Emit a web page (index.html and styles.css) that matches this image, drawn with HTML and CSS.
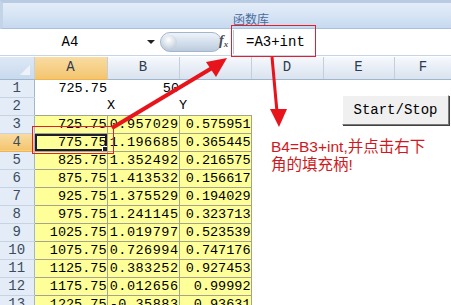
FILE: index.html
```html
<!DOCTYPE html>
<html lang="zh">
<head>
  <meta charset="UTF-8" />
  <title>函数库 - 填充柄</title>
  <link rel="stylesheet" href="styles.css">
</head>
<body>
  <div class="window">
    <!-- Ribbon group strip -->
    <div class="ribbon">
      <div class="ribbon-label">函数库</div>
    </div>

    <!-- Name box + formula bar -->
    <div class="formula-bar">
      <div class="name-box">A4</div>
      <div class="name-drop"></div>
      <div class="pill"><span class="knob"></span></div>
      <div class="fx">f<sub>x</sub></div>
      <div class="formula-input">=A3+int</div>
    </div>

    <!-- Worksheet -->
    <table class="sheet">
      <colgroup>
        <col class="c-row"><col class="c-a"><col class="c-b"><col class="c-c"><col class="c-d"><col class="c-e"><col class="c-f">
      </colgroup>
      <tr class="col-heads">
        <th class="corner"></th><th class="hot">A</th><th>B</th><th>C</th><th>D</th><th>E</th><th>F</th>
      </tr>
      <tr><th>1</th><td class="num">725.75</td><td class="num">50</td><td></td><td></td><td></td><td></td></tr>
      <tr><th>2</th><td></td><td class="txt">X</td><td class="txt">Y</td><td></td><td></td><td></td></tr>
      <tr><th>3</th><td class="num y">725.75</td><td class="num y wide">0.957029</td><td class="num y">0.575951</td><td></td><td></td><td></td></tr>
      <tr><th class="hot">4</th><td class="num y active">775.75</td><td class="num y wide">1.196685</td><td class="num y">0.365445</td><td></td><td></td><td></td></tr>
      <tr><th>5</th><td class="num y">825.75</td><td class="num y wide">1.352492</td><td class="num y">0.216575</td><td></td><td></td><td></td></tr>
      <tr><th>6</th><td class="num y">875.75</td><td class="num y wide">1.413532</td><td class="num y">0.156617</td><td></td><td></td><td></td></tr>
      <tr><th>7</th><td class="num y">925.75</td><td class="num y wide">1.375529</td><td class="num y">0.194029</td><td></td><td></td><td></td></tr>
      <tr><th>8</th><td class="num y">975.75</td><td class="num y wide">1.241145</td><td class="num y">0.323713</td><td></td><td></td><td></td></tr>
      <tr><th>9</th><td class="num y">1025.75</td><td class="num y wide">1.019797</td><td class="num y">0.523539</td><td></td><td></td><td></td></tr>
      <tr><th>10</th><td class="num y">1075.75</td><td class="num y wide">0.726994</td><td class="num y">0.747176</td><td></td><td></td><td></td></tr>
      <tr><th>11</th><td class="num y">1125.75</td><td class="num y wide">0.383252</td><td class="num y">0.927453</td><td></td><td></td><td></td></tr>
      <tr><th>12</th><td class="num y">1175.75</td><td class="num y wide">0.012656</td><td class="num y">0.99992</td><td></td><td></td><td></td></tr>
      <tr><th>13</th><td class="num y">1225.75</td><td class="num y wide">-0.35883</td><td class="num y">0.93631</td><td></td><td></td><td></td></tr>
    </table>

    <!-- Floating control and annotations -->
    <button class="start-stop">Start/Stop</button>
    <div class="note">B4=B3+int,并点击右下<br>角的填充柄!</div>
    <div class="mark mark-formula"></div>
    <div class="mark mark-cell"></div>
    <svg class="arrows" width="451" height="305" viewBox="0 0 451 305">
      <g fill="#e8141c" stroke="#e8141c">
        <line x1="112" y1="128" x2="212" y2="68" stroke-width="4" />
        <polygon points="227,58 206,62 216,77" stroke="none" />
        <line x1="272" y1="57" x2="277" y2="112" stroke-width="3" />
        <polygon points="270,109 287,109 279,127" stroke="none" />
      </g>
    </svg>
  </div>
</body>
</html>
```

FILE: styles.css
```css
html, body {
  margin: 0;
  padding: 0;
  background: #fff;
  overflow: hidden;
}
.window {
  position: relative;
  width: 451px;
  height: 305px;
  overflow: hidden;
  font-family: "Liberation Mono", "DejaVu Sans Mono", monospace;
}
/* Ribbon strip with the group label */
.ribbon {
  height: 25px;
  border-top: 3px solid #b9cbe2;
  border-left: 3px solid #c3d3e8;
  border-bottom: 1px solid #a9bfdb;
  background: linear-gradient(to bottom, #e4edf8, #d9e6f5 40%, #c7d9f0);
  position: relative;
}
.ribbon-label {
  position: absolute;
  left: 230px;
  top: 9px;
  font-family: "Noto Sans CJK SC", sans-serif;
  font-size: 12px;
  line-height: 14px;
  color: #4a6c9b;
}
/* Formula bar */
.formula-bar {
  display: flex;
  align-items: center;
  height: 26px;
  background: #fff;
  border-bottom: 1px solid #c5d4e6;
}
.name-box {
  width: 140px;
  text-align: center;
  font-size: 14px;
  color: #000;
}
.name-drop {
  width: 0;
  height: 0;
  margin-left: 7px;
  border-left: 4px solid transparent;
  border-right: 4px solid transparent;
  border-top: 4px solid #222;
}
.pill {
  width: 62px;
  height: 20px;
  margin-left: 5px;
  border-radius: 10px;
  background: linear-gradient(to bottom, #eef3f9, #d2deeb 55%, #bccbdd);
  border: 1px solid #a3b5ca;
  box-sizing: border-box;
  position: relative;
}
.knob {
  position: absolute;
  left: 2px;
  top: 2px;
  width: 14px;
  height: 14px;
  border-radius: 50%;
  background: radial-gradient(circle at 40% 35%, #ffffff, #c9d4e0 70%, #a9b6c6);
}
.fx {
  margin-left: -3px;
  width: 14px;
  position: relative;
  font-family: "Liberation Serif", serif;
  font-style: italic;
  font-weight: bold;
  font-size: 14px;
  line-height: 14px;
  color: #4a4f58;
}
.fx sub {
  font-size: 9px;
  vertical-align: -2px;
}
.formula-input {
  flex: 1;
  height: 24px;
  line-height: 24px;
  border-left: 1px solid #b8c8dc;
  padding-left: 12px;
  font-size: 14px;
  color: #000;
}
/* Worksheet grid */
.sheet {
  border-collapse: collapse;
  table-layout: fixed;
  width: 452px;
  margin-top: 1px;
  font-size: 13.5px;
}
.c-row { width: 34px; }
.c-a { width: 73px; }
.c-b { width: 72px; }
.c-c { width: 72px; }
.c-d { width: 72px; }
.c-e { width: 71px; }
.c-f { width: 58px; }
.sheet th,
.sheet td {
  height: 18px;
  padding: 0;
  box-sizing: border-box;
  white-space: nowrap;
  overflow: hidden;
  line-height: 17px;
}
.sheet th {
  font-weight: normal;
  text-align: center;
  background: #e4ecf7;
  color: #3b4c60;
  border-bottom: 1px solid #c6d3e3;
  border-right: 1px solid #9eb6ce;
  font-size: 14px;
}
.col-heads th {
  height: 22px;
  line-height: 21px;
  background: linear-gradient(to bottom, #f6f9fd, #e4ebf4 60%, #dae3ee);
  border-right: 1px solid #c3cfdd;
  border-bottom: 1px solid #9eb6ce;
  color: #2c3c4f;
}
.col-heads th.corner {
  background: linear-gradient(to bottom, #dde8f5, #c9daee);
  position: relative;
}
.corner::after {
  content: "";
  position: absolute;
  right: 4px;
  bottom: 4px;
  border-left: 10px solid transparent;
  border-bottom: 10px solid #eef3fa;
}
.sheet th.hot,
.col-heads th.hot {
  background: linear-gradient(to bottom, #f9dca2, #f3c46e);
  border-bottom-color: #f2b24c;
}
.sheet td {
  color: #000;
}
.num {
  text-align: right;
  padding-right: 3px;
}
.txt {
  text-align: left;
  padding-left: 4px;
}
.y {
  background: #ffff99;
  border: 1px solid #a4a48c;
}
.wide {
  letter-spacing: 0.5px;
  padding-right: 2px;
}
.active {
  position: relative;
  box-shadow: inset 0 0 0 2px #1d1d2b;
}
.active::after {
  content: "";
  position: absolute;
  right: -2px;
  bottom: -2px;
  width: 5px;
  height: 5px;
  background: #1d1d2b;
  border: 1px solid #fff;
}
/* Floating ActiveX-like button */
.start-stop {
  position: absolute;
  left: 342px;
  top: 95px;
  width: 107px;
  height: 30px;
  background: #f0f0f0;
  border: 1px solid;
  border-color: #fff #7a7a7a #7a7a7a #fff;
  box-shadow: 1px 1px 0 #404040;
  font-family: "Liberation Mono", monospace;
  font-size: 14px;
  color: #000;
  padding: 0;
}
/* Red annotations */
.note {
  position: absolute;
  left: 271px;
  top: 138px;
  font-family: "Liberation Sans", "Noto Sans CJK SC", sans-serif;
  font-size: 15.5px;
  line-height: 18px;
  color: #d01820;
}
.mark {
  position: absolute;
  border: 1px solid #e0202e;
}
.mark-formula {
  left: 231px;
  top: 25px;
  width: 83px;
  height: 30px;
}
.mark-cell {
  left: 32px;
  top: 126px;
  width: 80px;
  height: 26px;
}
.arrows {
  position: absolute;
  left: 0;
  top: 0;
  pointer-events: none;
}
```
